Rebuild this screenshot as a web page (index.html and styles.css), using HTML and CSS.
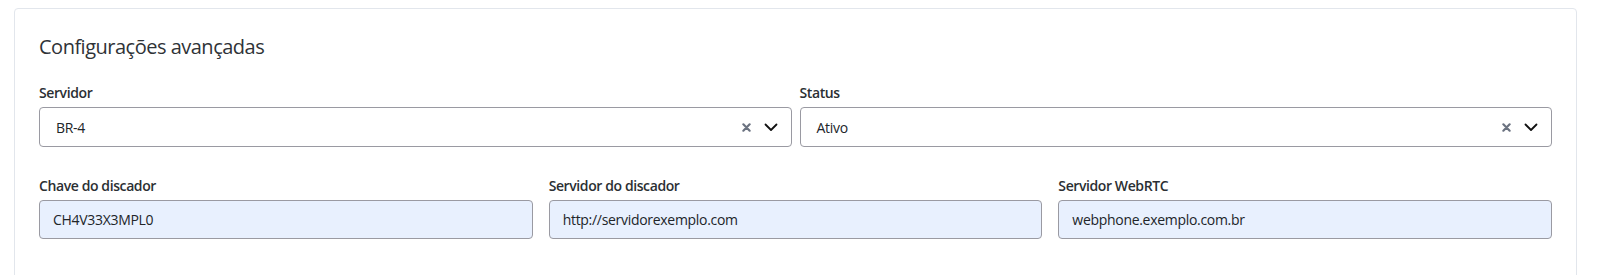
FILE: index.html
```
<!DOCTYPE html>
<html lang="pt-BR">
  <head>
    <meta charset="UTF-8" />
    <meta name="viewport" content="width=device-width, initial-scale=1.0" />
    <title>Configurações avançadas</title>
    <link rel="stylesheet" href="styles.css">
  </head>
  <body>
    <div class="page">
      <div class="card">
        <h5 class="card-title">Configurações avançadas</h5>

        <div class="row row-2">
          <div class="field">
            <label class="field-label">Servidor</label>
            <div class="select">
              <span class="select-value">BR-4</span>
              <span class="select-clear">
                <svg width="9" height="9" viewBox="0 0 10 10"><path d="M1.5 1.5 L8.5 8.5 M8.5 1.5 L1.5 8.5" stroke="#6b7280" stroke-width="2.4" stroke-linecap="round"/></svg>
              </span>
              <span class="select-arrow">
                <svg width="14" height="9" viewBox="0 0 14 9"><path d="M1.5 1.5 L7 7 L12.5 1.5" fill="none" stroke="#111" stroke-width="1.8" stroke-linecap="round" stroke-linejoin="round"/></svg>
              </span>
            </div>
          </div>
          <div class="field">
            <label class="field-label">Status</label>
            <div class="select">
              <span class="select-value">Ativo</span>
              <span class="select-clear">
                <svg width="9" height="9" viewBox="0 0 10 10"><path d="M1.5 1.5 L8.5 8.5 M8.5 1.5 L1.5 8.5" stroke="#6b7280" stroke-width="2.4" stroke-linecap="round"/></svg>
              </span>
              <span class="select-arrow">
                <svg width="14" height="9" viewBox="0 0 14 9"><path d="M1.5 1.5 L7 7 L12.5 1.5" fill="none" stroke="#111" stroke-width="1.8" stroke-linecap="round" stroke-linejoin="round"/></svg>
              </span>
            </div>
          </div>
        </div>

        <div class="row row-3">
          <div class="field">
            <label class="field-label">Chave do discador</label>
            <input class="input" type="text" value="CH4V33X3MPL0" />
          </div>
          <div class="field">
            <label class="field-label">Servidor do discador</label>
            <input class="input" type="text" value="http://servidorexemplo.com" />
          </div>
          <div class="field">
            <label class="field-label">Servidor WebRTC</label>
            <input class="input" type="text" value="webphone.exemplo.com.br" />
          </div>
        </div>
      </div>
    </div>
  </body>
</html>
```

FILE: styles.css
```
* {
  margin: 0;
  padding: 0;
  box-sizing: border-box;
}
body {
  font-family: "Segoe UI", "Open Sans", "Noto Sans", sans-serif;
  background: #fff;
  color: #212529;
}
.page {
  padding: 8px 22px 0 14px;
}
.card {
  border: 1px solid #e2e6ec;
  border-radius: 4px;
  padding: 26px 24px 40px 24px;
}
.card-title {
  font-size: 20px;
  font-weight: 400;
  line-height: 24px;
  letter-spacing: -0.5px;
  color: #2f3337;
  margin-bottom: 23px;
}
.row {
  display: grid;
}
.row-2 {
  grid-template-columns: 1fr 1fr;
  gap: 8px;
  margin-bottom: 28px;
}
.row-3 {
  grid-template-columns: 1fr 1fr 1fr;
  gap: 16px;
}
.field {
  display: flex;
  flex-direction: column;
}
.field-label {
  font-size: 14px;
  font-weight: 600;
  line-height: 21px;
  letter-spacing: -0.4px;
  color: #2b2f33;
  margin-bottom: 4px;
}
.select {
  height: 40px;
  border: 1px solid #9a9aa2;
  border-radius: 4px;
  display: flex;
  align-items: center;
  padding: 0 13px 0 16px;
  background: #fff;
}
.select-value {
  flex: 1;
  font-size: 14px;
  letter-spacing: -0.3px;
  color: #212529;
}
.select-clear {
  display: flex;
  align-items: center;
  margin-right: 13px;
}
.select-arrow {
  display: flex;
  align-items: center;
}
.input {
  height: 39px;
  border: 1px solid #9a9aa2;
  border-radius: 4px;
  background: #e8f0fe;
  padding: 0 13px;
  font-family: inherit;
  font-size: 14px;
  letter-spacing: -0.3px;
  color: #212529;
  outline: none;
}
```
